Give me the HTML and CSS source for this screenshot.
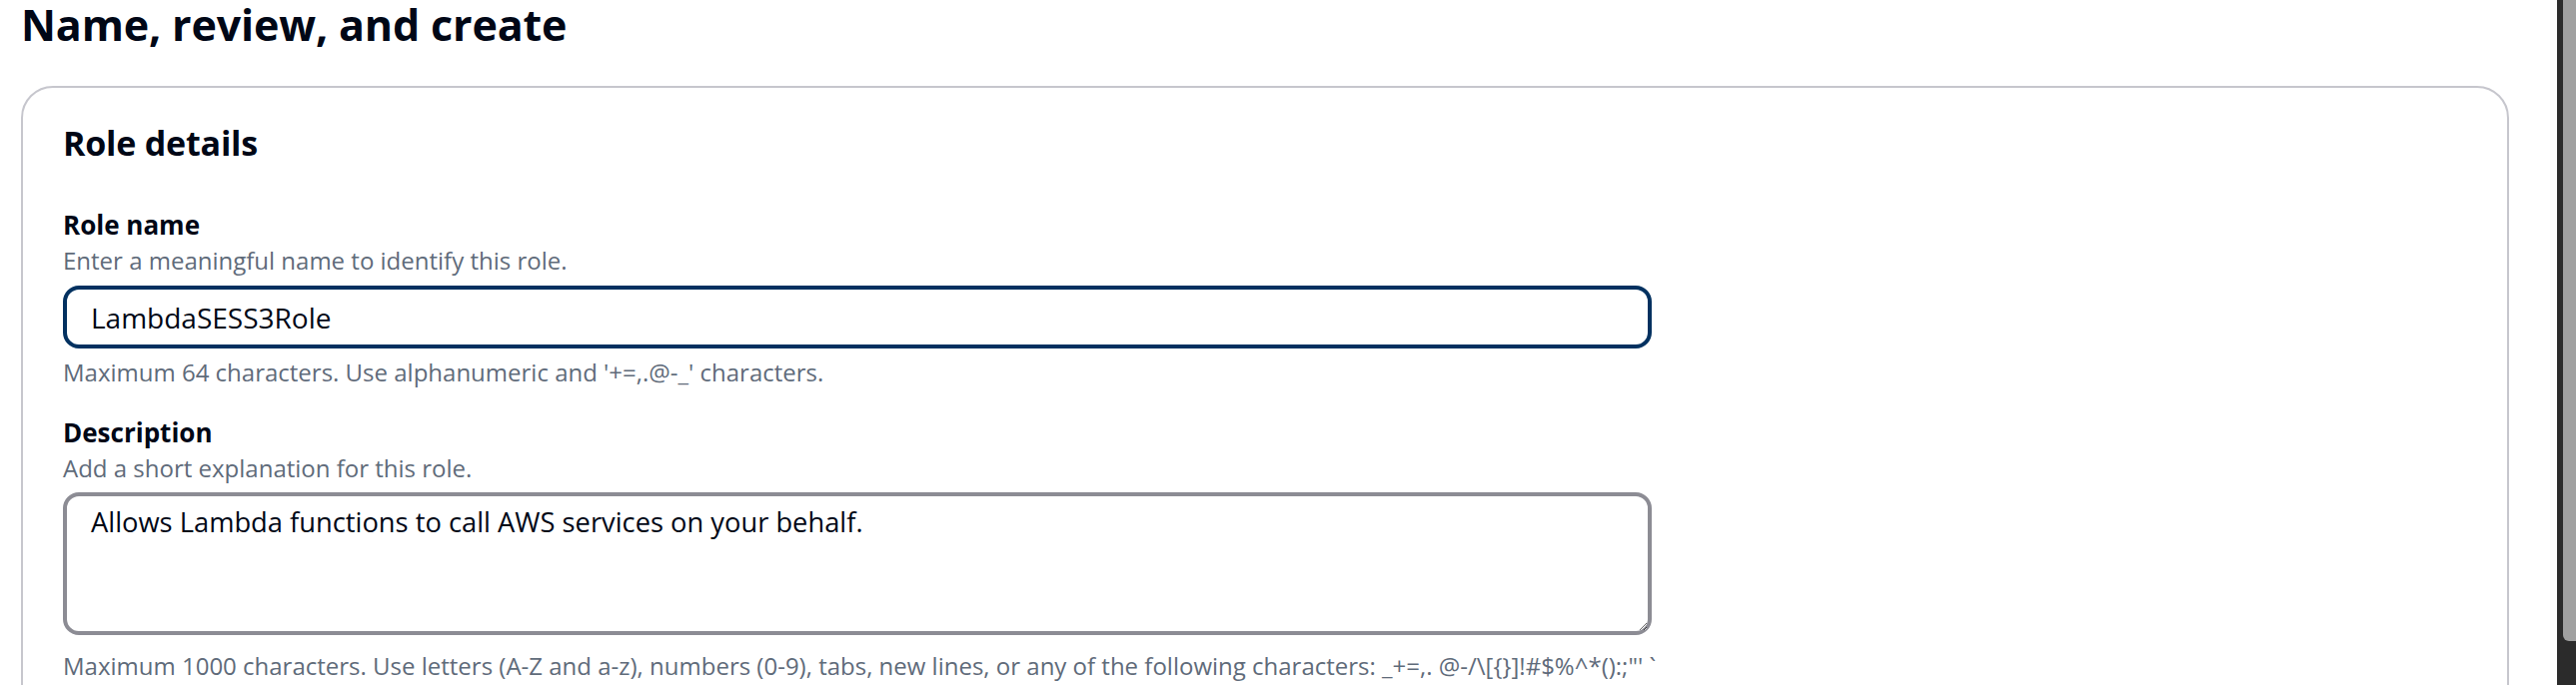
FILE: index.html
```html
<!DOCTYPE html>
<html lang="en">
<head>
<meta charset="utf-8">
<title>Name, review, and create</title>
<link rel="stylesheet" href="styles.css">
</head>
<body>
<div class="page">
  <main class="main">
    <h1 class="page-title">Name, review, and create</h1>
    <section class="card">
      <h2 class="card-title">Role details</h2>
      <div class="field field-name">
        <label class="label" for="role-name">Role name</label>
        <div class="desc">Enter a meaningful name to identify this role.</div>
        <div class="input focused" id="role-name">LambdaSESS3Role</div>
        <div class="hint">Maximum 64 characters. Use alphanumeric and '+=,.@-_' characters.</div>
      </div>
      <div class="field field-desc">
        <label class="label" for="role-desc">Description</label>
        <div class="desc">Add a short explanation for this role.</div>
        <textarea class="textarea" id="role-desc">Allows Lambda functions to call AWS services on your behalf.</textarea>
        <div class="hint hint-area">Maximum 1000 characters. Use letters (A-Z and a-z), numbers (0-9), tabs, new lines, or any of the following characters: _+=,. @-/\[{}]!#$%^*():;"' `</div>
      </div>
    </section>
  </main>
  <div class="scrollbar"><div class="thumb"></div></div>
</div>
</body>
</html>
```

FILE: styles.css
```css
html, body {
  margin: 0;
  padding: 0;
  background: #ffffff;
  height: 686px;
  overflow: hidden;
}

body {
  font-family: "Open Sans", "Noto Sans", "Liberation Sans", sans-serif;
  color: #000716;
}

.page {
  display: flex;
  height: 686px;
}

.main {
  flex: 1;
  min-width: 0;
  padding: 1px 48px 0 21px;
}

.page-title {
  margin: 0 0 37px 0;
  font-size: 43px;
  line-height: 48px;
  font-weight: 700;
  letter-spacing: -0.15px;
  color: #000716;
}

.card {
  border: 2px solid #c6c6cd;
  border-radius: 32px;
  padding: 33px 40px 0 40px;
  height: 900px;
  box-sizing: border-box;
}

.card-title {
  margin: 0;
  font-size: 34px;
  line-height: 44px;
  font-weight: 700;
  letter-spacing: -0.2px;
  color: #000716;
}

.field {
  display: flex;
  flex-direction: column;
  align-items: flex-start;
}

.field-name {
  margin-top: 42px;
}

.field-desc {
  margin-top: 26px;
}

.label {
  font-size: 26px;
  line-height: 36px;
  font-weight: 700;
  color: #000716;
}

.desc {
  margin-top: 2px;
  font-size: 24px;
  line-height: 32px;
  color: #5f6b7a;
}

.input {
  margin-top: 9px;
  box-sizing: border-box;
  width: 1590px;
  height: 63px;
  border: 4px solid #033160;
  border-radius: 16px;
  padding: 0 24px;
  display: flex;
  align-items: center;
  font-size: 28px;
  color: #000716;
}

.textarea {
  display: block;
  margin: 8px 0 0 0;
  box-sizing: border-box;
  width: 1590px;
  height: 143px;
  border: 4px solid #8c8c94;
  border-radius: 16px;
  padding: 8px 24px;
  font-family: "Open Sans", "Noto Sans", "Liberation Sans", sans-serif;
  font-size: 27.3px;
  line-height: 36px;
  color: #000716;
  resize: vertical;
  outline: none;
  background: #ffffff;
}

.hint {
  margin-top: 8px;
  font-size: 24px;
  line-height: 32px;
  color: #5f6b7a;
}

.hint-area {
  margin-top: 15px;
}

.scrollbar {
  flex: 0 0 19px;
  background: #2b2b2b;
  padding-left: 6px;
  box-sizing: border-box;
}

.thumb {
  height: 642px;
  background: #a0a0a0;
  border-bottom-left-radius: 6px;
}
```
